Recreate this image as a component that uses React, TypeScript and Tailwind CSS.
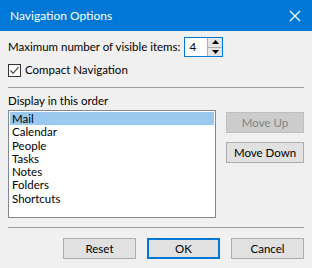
const ITEMS = ["Mail", "Calendar", "People", "Tasks", "Notes", "Folders", "Shortcuts"];

export default function App() {
  return (
    <div className="w-[312px] h-[268px] overflow-hidden bg-[#f0f0f0] font-['Lato',sans-serif] text-[11.5px] text-black">
      <div className="h-[31px] bg-[#0078d7] flex items-center justify-between pl-[10px] pr-[11px]">
        <span className="text-white text-[12px]">Navigation Options</span>
        <svg width="12" height="12" viewBox="0 0 12 12">
          <path d="M1 1 L11 11 M11 1 L1 11" stroke="white" strokeWidth="1.2" />
        </svg>
      </div>

      <div className="px-2">
        <div className="mt-[6px] h-[20px] flex items-center">
          <span className="leading-[16px]">Maximum number of visible items:</span>
          <div className="ml-[4px] h-[20px] flex bg-white border border-[#0078d7]">
            <div className="w-[22px] pl-[4px] leading-[18px]">4</div>
            <div className="w-[15px] flex flex-col border-l border-[#adadad]">
              <div className="flex-1 bg-[#e5e5e5] border-b border-[#adadad] flex items-center justify-center">
                <svg width="7" height="4" viewBox="0 0 7 4"><path d="M3.5 0 L7 4 L0 4 Z" fill="#000" /></svg>
              </div>
              <div className="flex-1 bg-[#e5e5e5] flex items-center justify-center">
                <svg width="7" height="4" viewBox="0 0 7 4"><path d="M0 0 L7 0 L3.5 4 Z" fill="#000" /></svg>
              </div>
            </div>
          </div>
        </div>

        <div className="mt-[6px] flex items-center h-[14px]">
          <div className="w-[13px] h-[13px] border border-[#333] bg-white flex items-center justify-center">
            <svg width="11" height="11" viewBox="0 0 11 11">
              <path d="M1.5 5.5 L4.2 8.3 L9.5 2.2" stroke="#333" strokeWidth="1.1" fill="none" />
            </svg>
          </div>
          <span className="ml-[4px] leading-[14px]">Compact Navigation</span>
        </div>

        <div className="mt-[10px] h-px bg-[#a0a0a0]" />

        <div className="mt-[6px] leading-[14px]">Display in this order</div>

        <div className="mt-[2px] flex">
          <div className="w-[208px] h-[108px] bg-white border border-[#828790] p-px">
            {ITEMS.map((item, i) => (
              <div
                key={item}
                className={`h-[13.3px] leading-[13px] pl-[2px] ${i === 0 ? "bg-[#99c9ef]" : ""}`}
              >
                {item}
              </div>
            ))}
          </div>
          <div className="ml-[10px] w-[78px] flex flex-col">
            <button className="mt-[2px] h-[21px] bg-[#cccccc] border border-[#bfbfbf] text-[#838383]">
              Move Up
            </button>
            <button className="mt-[9px] h-[21px] bg-[#e1e1e1] border border-[#adadad]">
              Move Down
            </button>
          </div>
        </div>

        <div className="mt-[9px] h-px bg-[#a0a0a0]" />

        <div className="mt-[10px] flex justify-end gap-[11px]">
          <button className="w-[73px] h-[21px] bg-[#e1e1e1] border border-[#adadad]">Reset</button>
          <button className="w-[73px] h-[21px] bg-[#e1e1e1] border-2 border-[#0078d7]">OK</button>
          <button className="w-[73px] h-[21px] bg-[#e1e1e1] border border-[#adadad]">Cancel</button>
        </div>
      </div>
    </div>
  );
}
